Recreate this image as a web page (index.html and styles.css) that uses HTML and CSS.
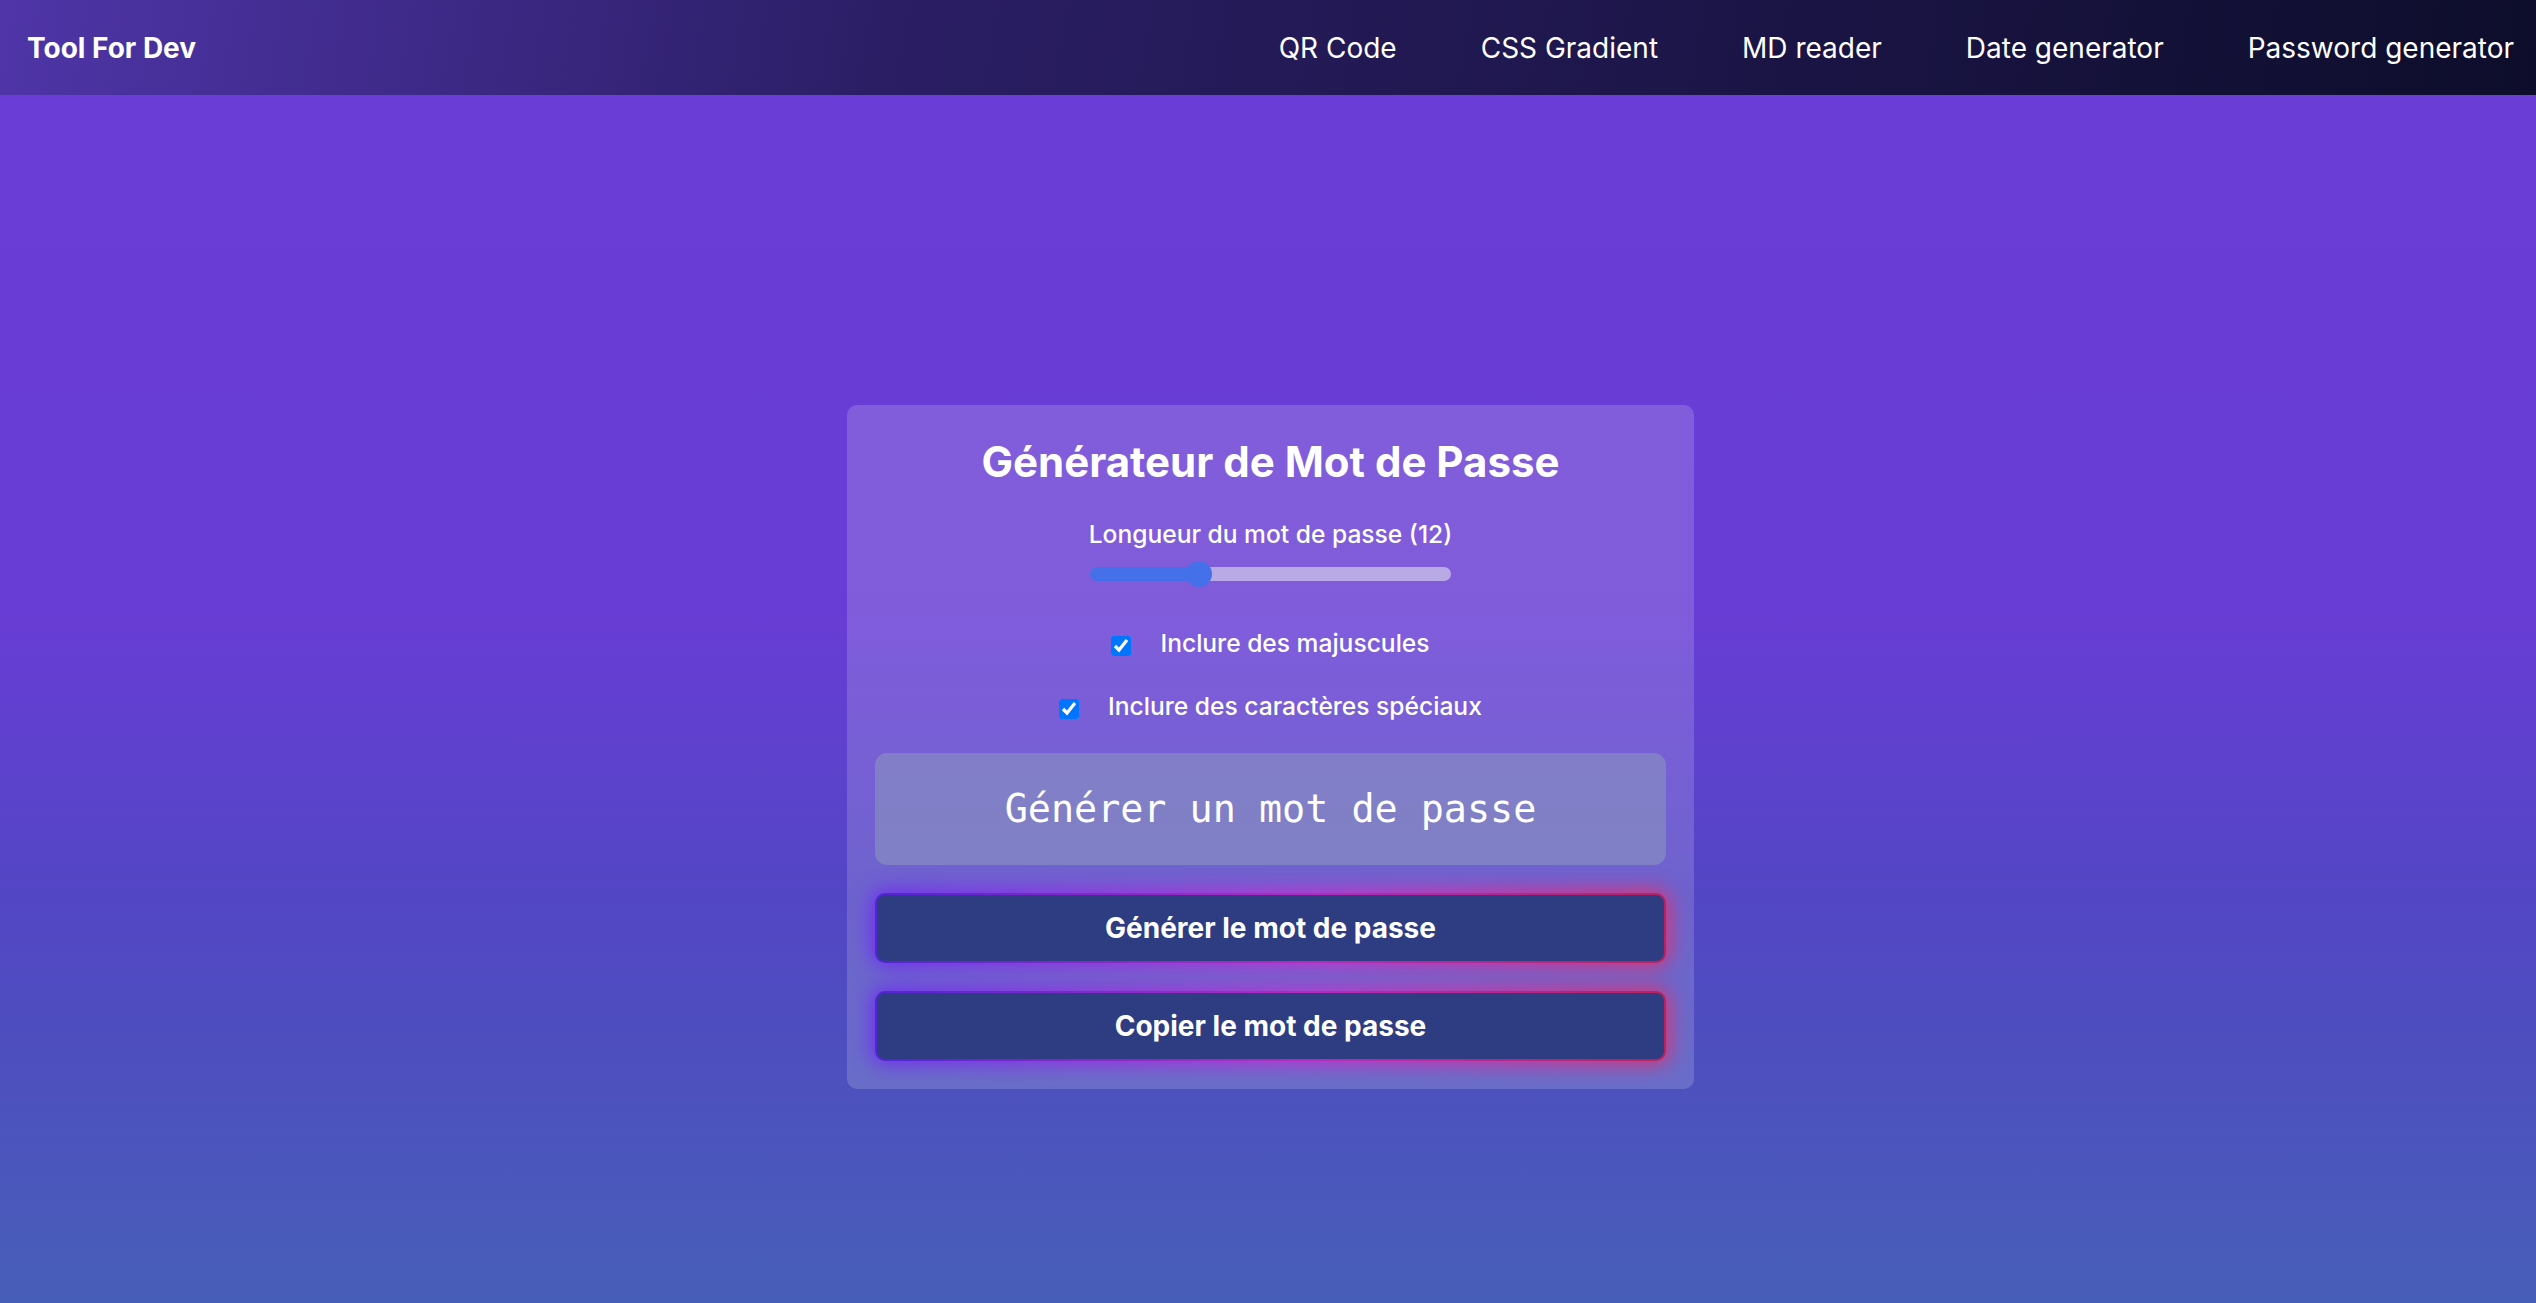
FILE: index.html
```html
<!DOCTYPE html>
<html lang="fr">
<head>
<meta charset="utf-8">
<title>Tool For Dev - Password generator</title>
<link rel="stylesheet" href="styles.css">
</head>
<body>
<header class="topbar">
  <div class="brand">Tool For Dev</div>
  <nav class="nav">
    <a class="nav-link" href="#">QR Code</a>
    <a class="nav-link" href="#">CSS Gradient</a>
    <a class="nav-link" href="#">MD reader</a>
    <a class="nav-link" href="#">Date generator</a>
    <a class="nav-link" href="#">Password generator</a>
  </nav>
</header>
<main class="main">
  <section class="card">
    <h1 class="title">Générateur de Mot de Passe</h1>
    <div class="length">
      <label class="length-label" for="len">Longueur du mot de passe (12)</label>
      <input class="range" id="len" type="range" min="4" max="32" value="12" style="--fill: 30.2%">
    </div>
    <div class="options">
      <label class="option"><input class="check" type="checkbox" checked><span>Inclure des majuscules</span></label>
      <label class="option"><input class="check" type="checkbox" checked><span>Inclure des caractères spéciaux</span></label>
    </div>
    <div class="output">Générer un mot de passe</div>
    <button class="btn" type="button">Générer le mot de passe</button>
    <button class="btn" type="button">Copier le mot de passe</button>
  </section>
</main>
</body>
</html>
```
FILE: styles.css
```css
* { box-sizing: border-box; }

html, body { margin: 0; padding: 0; }

body {
  font-family: Inter, "Noto Sans", "Liberation Sans", sans-serif;
  color: #fff;
  background: #4464b4;
}

.topbar {
  height: 95px;
  display: flex;
  align-items: center;
  justify-content: space-between;
  padding: 0 22px 0 27px;
  background: linear-gradient(100deg, #4f35a8 0%, #2b1e65 35%, #0d0d2b 100%);
}

.brand {
  font-size: 28px;
  font-weight: 700;
}

.nav {
  display: flex;
  align-items: center;
  gap: 84px;
}

.nav-link {
  color: #fff;
  text-decoration: none;
  font-size: 28px;
  font-weight: 400;
}

.main {
  min-height: 100vh;
  display: flex;
  align-items: center;
  justify-content: center;
  background: linear-gradient(180deg, #6a3dd6 0%, #683dd5 40%, #5246c4 62%, #4464b4 100%);
}

.card {
  width: 847px;
  padding: 28px;
  border-radius: 10px;
  background: rgba(255, 255, 255, 0.16);
  display: flex;
  flex-direction: column;
  align-items: center;
  isolation: isolate;
  margin-left: 5px;
}

.title {
  margin: 5px 0 34px;
  font-size: 42px;
  font-weight: 700;
  line-height: 48px;
}

.length {
  display: flex;
  flex-direction: column;
  align-items: center;
}

.length-label {
  font-size: 24.6px;
  font-weight: 500;
  line-height: 29px;
}

.range {
  -webkit-appearance: none;
  appearance: none;
  width: 361px;
  height: 26px;
  margin: 12px 0 0;
  padding: 0;
  background: transparent;
}

.range::-webkit-slider-runnable-track {
  height: 14px;
  border-radius: 7px;
  background: linear-gradient(to right, #4471ea var(--fill), #b9aae6 var(--fill));
}

.range::-webkit-slider-thumb {
  -webkit-appearance: none;
  appearance: none;
  width: 26px;
  height: 26px;
  margin-top: -6px;
  border-radius: 50%;
  background: #4471ea;
  border: none;
}

.options {
  margin-top: 42px;
  display: flex;
  flex-direction: column;
  align-items: center;
  gap: 34px;
}

.option {
  display: flex;
  align-items: center;
  gap: 29px;
  font-size: 24.6px;
  font-weight: 500;
  line-height: 29px;
}

.check {
  width: 20px;
  height: 20px;
  margin: 5px 0 0;
}

.output {
  margin-top: 32px;
  width: 100%;
  height: 112px;
  border-radius: 12px;
  background: rgba(141, 157, 187, 0.5);
  display: flex;
  align-items: center;
  justify-content: center;
  font-family: "DejaVu Sans Mono", "Liberation Mono", monospace;
  font-size: 38.4px;
  color: #fff;
}

.btn {
  position: relative;
  margin-top: 28px;
  width: 100%;
  height: 70px;
  border: 2px solid transparent;
  border-radius: 10px;
  background:
    linear-gradient(#2e3c82, #2e3c82) padding-box,
    linear-gradient(90deg, #5424d6 0%, #b52ac0 55%, #b8225f 100%) border-box;
  color: #fff;
  font-family: Inter, "Noto Sans", "Liberation Sans", sans-serif;
  font-size: 28px;
  font-weight: 700;
  cursor: pointer;
}

.btn::before {
  content: "";
  position: absolute;
  inset: -5px;
  z-index: -1;
  border-radius: 14px;
  background: linear-gradient(90deg, #6d2cf2 0%, #c530d2 55%, #e0306e 100%);
  filter: blur(10px);
}
```
